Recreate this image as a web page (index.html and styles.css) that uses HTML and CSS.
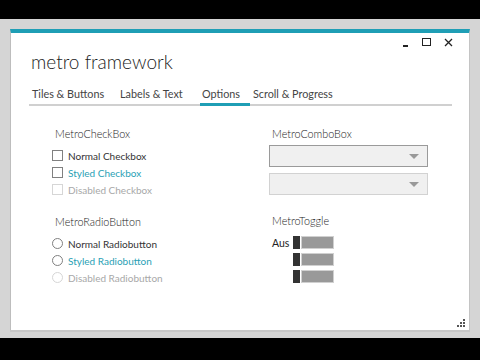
FILE: index.html
```html
<!DOCTYPE html>
<html>
<head>
<meta charset="utf-8">
<link rel="stylesheet" href="styles.css">
</head>
<body>
<div class="topbar"></div>
<div class="desk">
  <div class="window">
    <div class="controls">
      <span class="ctl min"></span>
      <span class="ctl max"></span>
      <span class="ctl close">
        <svg width="9" height="9" viewBox="0 0 9 9"><path d="M1 1L8 8M8 1L1 8" stroke="#222" stroke-width="1.3"/></svg>
      </span>
    </div>
    <div class="title">metro framework</div>
    <div class="tabs">
      <span class="tab t1">Tiles &amp; Buttons</span>
      <span class="tab t2">Labels &amp; Text</span>
      <span class="tab t3 active">Options</span>
      <span class="tab t4">Scroll &amp; Progress</span>
    </div>
    <div class="content">
      <div class="col left">
        <div class="group">
          <div class="head">MetroCheckBox</div>
          <div class="item"><span class="box"></span><span>Normal Checkbox</span></div>
          <div class="item styled"><span class="box"></span><span>Styled Checkbox</span></div>
          <div class="item disabled"><span class="box"></span><span>Disabled Checkbox</span></div>
        </div>
        <div class="group g2">
          <div class="head">MetroRadioButton</div>
          <div class="item"><span class="radio"></span><span>Normal Radiobutton</span></div>
          <div class="item styled"><span class="radio"></span><span>Styled Radiobutton</span></div>
          <div class="item disabled"><span class="radio"></span><span>Disabled Radiobutton</span></div>
        </div>
      </div>
      <div class="col right">
        <div class="group">
          <div class="head">MetroComboBox</div>
          <div class="combo first"><span class="arrow"></span></div>
          <div class="combo"><span class="arrow"></span></div>
        </div>
        <div class="group g2r">
          <div class="head">MetroToggle</div>
          <div class="trow"><span class="tlabel">Aus</span><span class="knob"></span><span class="track"></span></div>
          <div class="trow"><span class="tlabel"></span><span class="knob"></span><span class="track"></span></div>
          <div class="trow"><span class="tlabel"></span><span class="knob"></span><span class="track"></span></div>
        </div>
      </div>
    </div>
    <div class="grip">
      <svg width="10" height="10" viewBox="0 0 10 10">
        <rect x="7" y="1" width="2" height="2" fill="#555"/>
        <rect x="4" y="4" width="2" height="2" fill="#555"/>
        <rect x="7" y="4" width="2" height="2" fill="#555"/>
        <rect x="1" y="7" width="2" height="2" fill="#555"/>
        <rect x="4" y="7" width="2" height="2" fill="#555"/>
        <rect x="7" y="7" width="2" height="2" fill="#555"/>
      </svg>
    </div>
  </div>
</div>
</body>
</html>
```
FILE: styles.css
```css
html, body {
  margin: 0;
  padding: 0;
  background: #000;
  width: 480px;
  height: 360px;
  overflow: hidden;
  font-family: "Lato", "Open Sans", sans-serif;
}
.topbar {
  height: 19px;
  background: #000;
}
.desk {
  height: 319px;
  background: #d5d5d5;
  box-sizing: border-box;
  padding: 10px 10px 8px 10px;
}
.window {
  position: relative;
  height: 301px;
  background: #fff;
  border-top: 4px solid #1f9eb5;
  border-left: 1px solid #bdbdbd;
  border-right: 1px solid #c4c4c4;
  box-sizing: border-box;
  box-shadow: 0 2px 0 #c8c8c8;
}
.controls {
  display: flex;
  justify-content: flex-end;
  gap: 13px;
  height: 18px;
  padding: 0 16px 0 0;
  align-items: center;
}
.ctl {
  display: block;
  width: 9px;
  height: 8px;
  position: relative;
}
.min {
  width: 6px;
}
.min::after {
  content: "";
  position: absolute;
  left: 0;
  bottom: -1px;
  width: 5px;
  height: 2px;
  background: #222;
}
.max {
  box-sizing: border-box;
  border: 1.3px solid #222;
  width: 9px;
  height: 8px;
}
.close { height: 9px; }
.close svg { display: block; }
.title {
  font-size: 19px;
  font-weight: 300;
  color: #222;
  padding-left: 20px;
  line-height: 24px;
  margin-top: -1px;
}
.tabs {
  margin: 10px 17px 0 18px;
  display: flex;
  border-bottom: 2px solid #d0d0d0;
  height: 20px;
}
.tab {
  font-size: 10.8px;
  color: #444;
  padding-left: 3px;
  line-height: 19px;
  position: relative;
  box-sizing: border-box;
  white-space: nowrap;
}
.t1 { width: 88px; }
.t2 { width: 82px; }
.t3 { width: 51px; }
.tab.active::after {
  content: "";
  position: absolute;
  left: 1px;
  right: 0;
  bottom: -2px;
  height: 3px;
  background: #1f9eb5;
}
.content {
  display: flex;
  padding: 21px 0 0 41px;
}
.col.left { width: 217px; }
.col.right { width: 170px; }
.head {
  font-size: 10.8px;
  font-weight: 300;
  color: #1a1a1a;
  line-height: 14px;
  padding-left: 3px;
  height: 20px;
}
.g2 { margin-top: 17px; }
.g2r { margin-top: 19px; }
.item {
  display: flex;
  align-items: center;
  height: 17px;
  font-size: 10px;
  color: #333;
  gap: 5px;
}
.item.styled { color: #2a9fb5; }
.item.disabled { color: #a8a8a8; }
.box {
  width: 9px;
  height: 9px;
  border: 1px solid #808080;
  display: block;
}
.disabled .box { border-color: #d6d6d6; }
.radio {
  width: 9px;
  height: 9px;
  border: 1px solid #808080;
  border-radius: 50%;
  display: block;
}
.disabled .radio { border-color: #d6d6d6; }
.combo {
  width: 157px;
  height: 20px;
  background: #f0f0f0;
  border: 1px solid #d2d2d2;
  margin-bottom: 6px;
  position: relative;
  margin-top: -2px;
}
.combo + .combo { margin-top: 0; }
.combo.first { border-color: #9a9a9a; }
.arrow {
  position: absolute;
  right: 8px;
  top: 8px;
  width: 0;
  height: 0;
  border-left: 5px solid transparent;
  border-right: 5px solid transparent;
  border-top: 5px solid #999;
}
.trow {
  display: flex;
  align-items: center;
  height: 17px;
}
.tlabel {
  width: 24px;
  font-size: 10.5px;
  color: #222;
  padding-left: 3px;
  box-sizing: border-box;
}
.knob {
  width: 7px;
  height: 13px;
  background: #333;
}
.track {
  width: 31px;
  height: 11px;
  background: #999;
  border: 1px solid #d0d0d0;
  margin-left: 1px;
}
.grip {
  position: absolute;
  right: 3px;
  bottom: 2px;
}
.grip svg { display: block; }
```
